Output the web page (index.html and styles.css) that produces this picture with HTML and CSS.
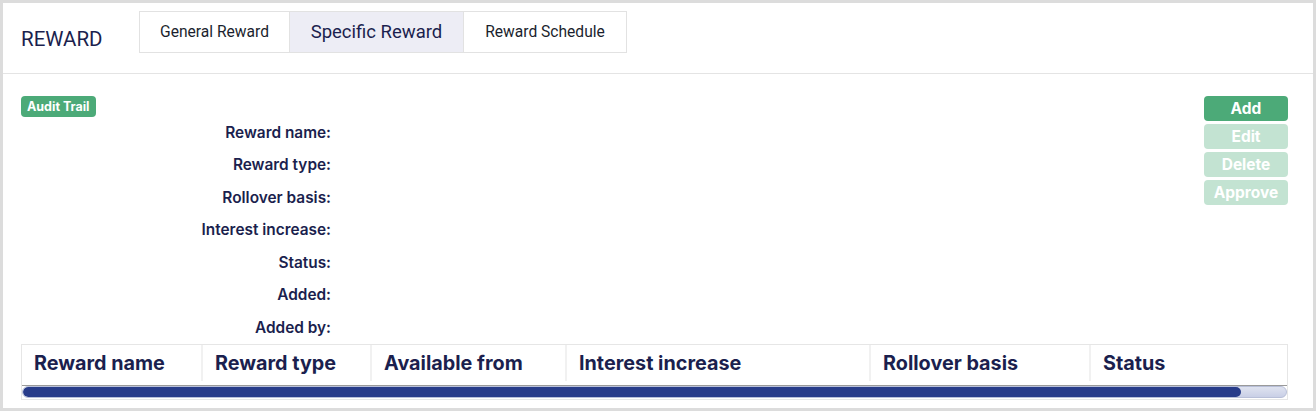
FILE: index.html
```html
<!DOCTYPE html>
<html>
<head>
<meta charset="utf-8">
<link rel="stylesheet" href="styles.css">
</head>
<body>
<div class="frame">
  <header class="header">
    <div class="title">REWARD</div>
    <nav class="tabs">
      <div class="tab">General Reward</div>
      <div class="tab active">Specific Reward</div>
      <div class="tab">Reward Schedule</div>
    </nav>
  </header>
  <main class="content">
    <div class="top">
      <div class="details">
        <span class="badge">Audit Trail</span>
        <dl class="fields">
          <dt>Reward name:</dt>
          <dt>Reward type:</dt>
          <dt>Rollover basis:</dt>
          <dt>Interest increase:</dt>
          <dt>Status:</dt>
          <dt>Added:</dt>
          <dt>Added by:</dt>
        </dl>
      </div>
      <div class="actions">
        <button class="btn">Add</button>
        <button class="btn disabled">Edit</button>
        <button class="btn disabled">Delete</button>
        <button class="btn disabled">Approve</button>
      </div>
    </div>
    <div class="table">
      <div class="thead">
        <div class="th c1">Reward name</div>
        <div class="th c2">Reward type</div>
        <div class="th c3">Available from</div>
        <div class="th c4">Interest increase</div>
        <div class="th c5">Rollover basis</div>
        <div class="th c6">Status</div>
      </div>
      <div class="scrollbar"><div class="thumb"></div></div>
    </div>
  </main>
</div>
</body>
</html>
```
FILE: styles.css
```css
* { box-sizing: border-box; }
html, body { margin: 0; padding: 0; background: #fff; }
body { font-family: Inter, "Noto Sans", sans-serif; color: #1b1f4e; }

.frame {
  width: 1316px;
  height: 411px;
  border: 3px solid #dcdcdc;
  display: flex;
  flex-direction: column;
  overflow: hidden;
}

.header {
  height: 71px;
  border-bottom: 1px solid #e4e4e4;
  display: flex;
  align-items: flex-start;
  padding: 8px 0 0 18px;
  flex-shrink: 0;
}
.title {
  font-family: Roboto, "Liberation Sans", sans-serif;
  font-size: 20.5px;
  line-height: 24px;
  color: #1b1f4e;
  width: 118px;
  margin-top: 16px;
}
.tabs {
  display: flex;
  height: 42px;
  border: 1px solid #e2e2e2;
}
.tab {
  font-family: Roboto, "Liberation Sans", sans-serif;
  font-size: 15.6px;
  color: #1b1f2e;
  display: flex;
  align-items: center;
  justify-content: center;
  border-right: 1px solid #e2e2e2;
}
.tab:nth-child(1) { width: 150px; }
.tab:nth-child(2) { width: 174px; }
.tab:nth-child(3) { width: 162px; border-right: none; }
.tab.active {
  background: #ededf5;
  font-size: 18.5px;
  color: #1b1f4e;
}

.content {
  flex: 1;
  padding: 22px 25px 0 18px;
  display: flex;
  flex-direction: column;
}
.top {
  display: flex;
  justify-content: space-between;
}
.details { display: flex; flex-direction: column; align-items: flex-start; }
.badge {
  background: #4caa78;
  color: #fff;
  font-weight: 700;
  font-size: 12.5px;
  line-height: 21px;
  height: 21px;
  padding: 0 6px;
  border-radius: 4px;
}
.fields {
  margin: -1px 0 0 0;
  width: 310px;
}
.fields dt {
  height: 32.5px;
  display: flex;
  align-items: center;
  justify-content: flex-end;
  font-size: 15.4px;
  font-weight: 600;
  color: #1b1f4e;
}

.actions {
  display: flex;
  flex-direction: column;
  gap: 3px;
  width: 84px;
}
.btn {
  font-family: Inter, "Noto Sans", sans-serif;
  height: 25px;
  border: none;
  border-radius: 4px;
  background: #4caa78;
  color: #fff;
  font-weight: 700;
  font-size: 15.5px;
  padding: 0;
}
.btn.disabled { background: #c3e3d2; }

.table {
  width: 1267px;
  border: 1px solid #e6e6e6;
}
.thead {
  display: flex;
  height: 41px;
  border-bottom: 1px solid #9a9a9a;
  align-items: flex-start;
}
.th {
  height: 36px;
  display: flex;
  align-items: center;
  padding-left: 12px;
  padding-top: 1px;
  font-size: 19.8px;
  font-weight: 700;
  border-right: 2px solid #f1f1f1;
  color: #1b1f4e;
  flex-shrink: 0;
}
.c1 { width: 181px; }
.c2 { width: 169px; }
.c3 { width: 195px; }
.c4 { width: 304px; }
.c5 { width: 220px; }
.c6 { flex: 1; border-right: none; }

.scrollbar {
  height: 12px;
  margin: 0 0 1px 0;
  background: linear-gradient(#dfe3f0, #c9cfe6);
  border: 1px solid #b8bfd8;
  border-radius: 6px;
  overflow: hidden;
}
.thumb {
  height: 100%;
  width: 1218px;
  background: #283c8a;
  border-radius: 6px;
}
```
